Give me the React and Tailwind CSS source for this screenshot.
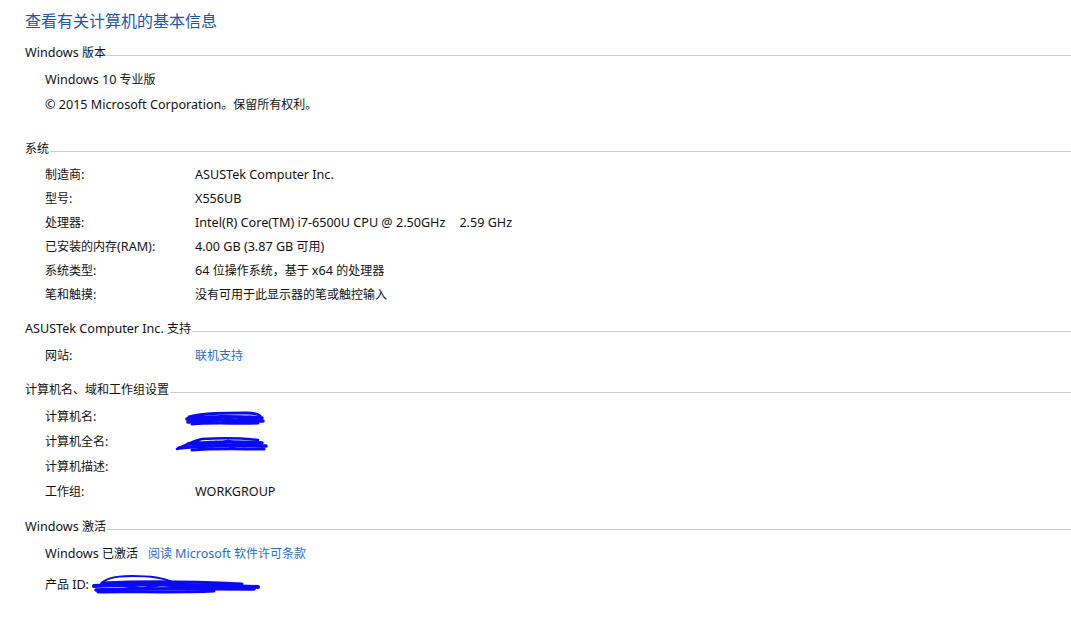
import React from "react";

const font = { fontFamily: '"Noto Sans", "Noto Sans CJK SC", sans-serif' };

// Latin runs are a touch wider in the original UI font
function L({ children }) {
  return <span className="text-[12.6px]">{children}</span>;
}

function SectionHeader({ children, className }) {
  return (
    <div className={"flex items-center h-[20px] " + (className || "")}>
      <span className="whitespace-nowrap">{children}</span>
      <div className="flex-1 h-px bg-[#cdcdcd] mt-[4px] ml-[1px]" />
    </div>
  );
}

function Row({ label, children, tall }) {
  return (
    <div className={"flex items-center pl-[20px] " + (tall ? "h-[25px]" : "h-[24px]")}>
      <div className="w-[150px] shrink-0 whitespace-nowrap">{label}</div>
      <div className="whitespace-nowrap">{children}</div>
    </div>
  );
}

function ScribbleA() {
  return (
    <svg width="82" height="18" viewBox="0 0 82 18" className="-ml-[11px] block">
      <g fill="none" stroke="#0a0af5" strokeLinecap="round" strokeLinejoin="round">
        <path d="M5 8 C20 4 40 4 62 4 C68 4 74 5 76 7" strokeWidth="3" />
        <path d="M3 10 C25 7 50 7 78 9" strokeWidth="3.5" />
        <path d="M4 13 C25 10 50 11 79 12" strokeWidth="3.5" />
        <path d="M8 15 C30 13 55 15 74 14" strokeWidth="3" />
        <path d="M10 9 L24 12 L38 7 L52 12 L66 8 L76 11" strokeWidth="3" />
        <path d="M14 12 L28 8 L44 13 L60 9 L72 13" strokeWidth="2.5" />
      </g>
    </svg>
  );
}

function ScribbleB() {
  return (
    <svg width="96" height="18" viewBox="0 0 96 18" className="-ml-[21px] block">
      <g fill="none" stroke="#0a0af5" strokeLinecap="round" strokeLinejoin="round">
        <path d="M3 15 C12 11 18 7 28 5 C46 4 66 4 84 6" strokeWidth="2.5" />
        <path d="M5 14 C30 11 60 11 92 12" strokeWidth="3.5" />
        <path d="M14 10 C36 8 60 7 88 9" strokeWidth="3.5" />
        <path d="M18 16 C40 14 66 15 90 15" strokeWidth="3" />
        <path d="M22 8 L38 12 L54 7 L70 12 L86 9" strokeWidth="3" />
        <path d="M26 13 L42 8 L58 13 L74 9 L88 12" strokeWidth="2.5" />
      </g>
    </svg>
  );
}

function ScribbleC() {
  return (
    <svg width="170" height="22" viewBox="0 0 170 22" className="ml-[3px] block">
      <g fill="none" stroke="#0a0af5" strokeLinecap="round" strokeLinejoin="round">
        <path d="M8 12 C10 6 20 2 40 2 C60 2 72 4 80 8" strokeWidth="2" />
        <path d="M2 12 C40 9 90 10 166 13" strokeWidth="4" />
        <path d="M4 16 C50 14 100 15 162 15" strokeWidth="3.5" />
        <path d="M10 9 C50 7 110 8 150 10" strokeWidth="3" />
        <path d="M6 18 C40 17 80 19 122 17" strokeWidth="3" />
        <path d="M30 11 L50 15 L70 10 L95 15 L120 10 L145 14" strokeWidth="3" />
      </g>
    </svg>
  );
}

export default function App() {
  return (
    <div className="w-[1071px] h-[639px] bg-white text-[12px] text-[#111] pl-[25px] pt-[8px]" style={font}>
      <div className="h-[24px] leading-[24px] text-[16px] text-[#1e56a8]" style={{ fontFamily: '"Noto Sans CJK SC", sans-serif' }}>查看有关计算机的基本信息</div>

      <SectionHeader className="mt-[11px]"><L>Windows</L> 版本</SectionHeader>
      <div className="pl-[20px] mt-[5px]">
        <div className="h-[25px] flex items-center"><span><L>Windows 10</L> 专业版</span></div>
        <div className="h-[25px] flex items-center"><span><L>© 2015 Microsoft Corporation</L>。保留所有权利。</span></div>
      </div>

      <SectionHeader className="mt-[21px]">系统</SectionHeader>
      <div className="mt-[4px]">
        <Row label={<>制造商<L>:</L></>}><L>ASUSTek Computer Inc.</L></Row>
        <Row label={<>型号<L>:</L></>}><L>X556UB</L></Row>
        <Row label={<>处理器<L>:</L></>}>
          <L>Intel(R) Core(TM) i7-6500U CPU @ 2.50GHz</L>
          <span className="ml-[14px]"><L>2.59 GHz</L></span>
        </Row>
        <Row label={<>已安装的内存<L>(RAM):</L></>}><L>4.00 GB (3.87 GB </L>可用<L>)</L></Row>
        <Row label={<>系统类型<L>:</L></>}><L>64 </L>位操作系统，基于 <L>x64 </L>的处理器</Row>
        <Row label={<>笔和触摸<L>:</L></>}>没有可用于此显示器的笔或触控输入</Row>
      </div>

      <SectionHeader className="mt-[12px]"><L>ASUSTek Computer Inc.</L> 支持</SectionHeader>
      <div className="mt-[5px]">
        <Row label={<>网站<L>:</L></>}>
          <span className="text-[#2a6fc4]">联机支持</span>
        </Row>
      </div>

      <SectionHeader className="mt-[12px]">计算机名、域和工作组设置</SectionHeader>
      <div className="mt-[5px]">
        <Row label={<>计算机名<L>:</L></>} tall><ScribbleA /></Row>
        <Row label={<>计算机全名<L>:</L></>} tall><ScribbleB /></Row>
        <Row label={<>计算机描述<L>:</L></>} tall></Row>
        <Row label={<>工作组<L>:</L></>} tall><L>WORKGROUP</L></Row>
      </div>

      <SectionHeader className="mt-[12px]"><L>Windows</L> 激活</SectionHeader>
      <div className="pl-[20px] mt-[5px]">
        <div className="h-[24px] flex items-center whitespace-nowrap">
          <span><L>Windows</L> 已激活</span>
          <span className="ml-[10px] text-[#2a6fc4]">阅读 <L>Microsoft</L> 软件许可条款</span>
        </div>
        <div className="h-[24px] mt-[7px] flex items-center whitespace-nowrap">
          <span>产品 <L>ID:</L></span>
          <ScribbleC />
        </div>
      </div>
    </div>
  );
}
